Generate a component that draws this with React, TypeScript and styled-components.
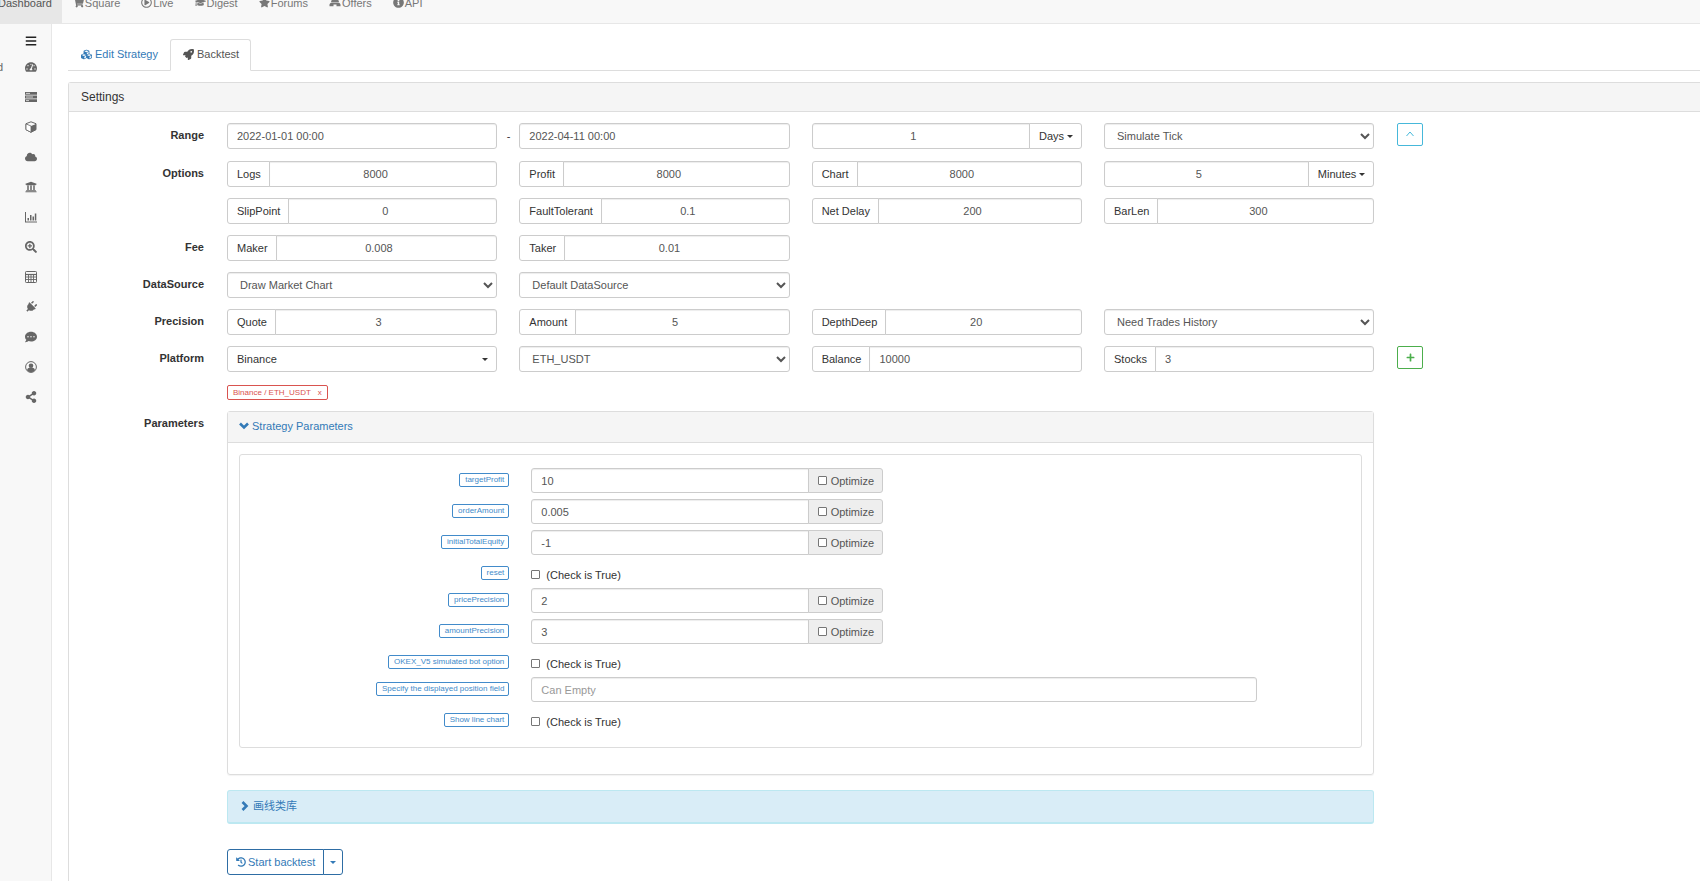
import React from "react";
import styled, { createGlobalStyle, css } from "styled-components";
import {
  FaShoppingCart, FaRegPlayCircle, FaGraduationCap, FaStar, FaInfoCircle, FaCloud, FaUniversity, FaPlug,
  FaShareAlt, FaSearchPlus, FaRocket, FaCubes, FaTachometerAlt, FaCommentDots, FaHistory,
  FaBars, FaPlus,
} from "react-icons/fa";

const Global = createGlobalStyle`
  *, *::before, *::after { box-sizing: border-box; }
  body {
    margin: 0;
    background: #fff;
    color: #333;
    font: 11px/16px "Liberation Sans", Arial, "Noto Sans CJK SC", sans-serif;
    overflow: hidden;
  }
  a { text-decoration: none; color: #337ab7; }
  button, input, select { font: inherit; }
`;

const Page = styled.div`
  display: flex;
  flex-direction: column;
  min-height: 100vh;
`;

const TopNav = styled.nav`
  display: flex;
  height: 39px;
  margin: -15px 0 0 -13px;
  background: #f8f8f8;
  border-bottom: 1px solid #e7e7e7;
`;

const NavLink = styled.a<{ $active?: boolean }>`
  display: flex;
  align-items: center;
  gap: 1px;
  padding: 0 10px 3px 11px;
  color: ${(p) => (p.$active ? "#555" : "#777")};
  background: ${(p) => (p.$active ? "#e7e7e7" : "transparent")};
`;

const Columns = styled.div`
  display: flex;
  flex: 1;
`;

const Sidebar = styled.aside`
  flex: 0 0 52px;
  padding-top: 6px;
  background: #f8f8f8;
  border-right: 1px solid #e7e7e7;
`;

const SideItem = styled.a<{ $menu?: boolean }>`
  display: flex;
  align-items: center;
  height: ${(p) => (p.$menu ? 22 : 30)}px;
  margin-left: -3px;
  padding-right: 14px;
  color: ${(p) => (p.$menu ? "#222" : "#666")};
  svg { margin-left: auto; width: 12px; height: 12px; }
`;

const Main = styled.main`
  flex: 1;
  min-width: 0;
  display: flex;
  flex-direction: column;
  padding: 15px 0 0 16px;
`;

const Tabs = styled.div`
  display: flex;
  height: 32px;
  border-bottom: 1px solid #ddd;
`;

const Tab = styled.a<{ $active?: boolean }>`
  display: flex;
  align-items: center;
  gap: 2px;
  height: 32px;
  padding: 0 11px 2px;
  border: 1px solid transparent;
  border-radius: 3px 3px 0 0;
  svg { width: 13px; height: 11px; }
  ${(p) => p.$active && css`
    color: #555;
    background: #fff;
    border-color: #ddd #ddd #fff;
  `}
`;

const Settings = styled.section`
  flex: 1;
  margin-top: 11px;
  border: solid #ddd;
  border-width: 1px 0 0 1px;
  border-top-left-radius: 3px;
`;

const SettingsHead = styled.h1`
  margin: 0;
  padding: 6px 12px;
  background: #f5f5f5;
  border-bottom: 1px solid #ddd;
  font-size: 12px;
  font-weight: 400;
`;

const Form = styled.form`
  display: flex;
  flex-direction: column;
  gap: 11px;
  padding: 11px 0;
`;

const Row = styled.div`
  display: grid;
  grid-template-columns: 441fr 877fr 877fr 877fr 877fr 944fr;
  &:first-child { padding-bottom: 1px; }
`;

const RowLabel = styled.div`
  padding: 4px 12px 0 0;
  text-align: right;
  font-weight: 700;
`;

const Cell = styled.div<{ $span?: number }>`
  grid-column: span ${(p) => p.$span || 1};
  min-width: 0;
  padding: 0 11px;
  position: relative;
`;

const Dash = styled.span`
  position: absolute;
  right: -2px;
  top: 5px;
`;

const control = css`
  width: 100%;
  min-width: 0;
  height: 26px;
  padding: 0 9px;
  color: #555;
  background: #fff;
  border: 1px solid #ccc;
  border-radius: 3px;
  box-shadow: inset 0 1px 1px rgba(0, 0, 0, 0.075);
  outline: 0;
`;

const Input = styled.input`
  ${control}
  &::placeholder { color: #999; }
`;

const Select = styled.select`
  ${control}
  padding-left: 8px;
`;

const Group = styled.div<{ $center?: boolean }>`
  display: flex;
  ${Input} {
    flex: 1;
    text-align: ${(p) => (p.$center ? "center" : "left")};
  }
  & > :first-child { border-top-right-radius: 0; border-bottom-right-radius: 0; }
  & > :last-child { border-top-left-radius: 0; border-bottom-left-radius: 0; }
  & > :not(:first-child) { margin-left: -1px; }
`;

const Addon = styled.label`
  flex: none;
  height: 26px;
  padding: 4px 8px 4px 9px;
  border: 1px solid #ccc;
  border-radius: 3px;
  background: #fff;
`;

const MenuButton = styled.button<{ $wide?: boolean }>`
  flex: none;
  display: flex;
  align-items: center;
  justify-content: space-between;
  gap: 3px;
  width: ${(p) => (p.$wide ? "100%" : "auto")};
  height: 26px;
  padding: 0 8px 0 9px;
  color: #333;
  background: #fff;
  border: 1px solid #ccc;
  border-radius: 3px;
`;

const Caret = styled.span`
  border: 3px solid transparent;
  border-top-color: currentColor;
  border-bottom: 0;
`;

const SquareButton = styled.button<{ $tone: string }>`
  display: grid;
  place-items: center;
  width: 26px;
  height: 23px;
  margin-left: 1px;
  padding: 0;
  color: ${(p) => p.$tone};
  background: #fff;
  border: 1px solid ${(p) => p.$tone};
  border-radius: 2px;
`;

const PlatformTag = styled.span`
  display: inline-flex;
  gap: 7px;
  height: 15px;
  margin-top: 2px;
  padding: 0 5px;
  border: 1px solid #d9534f;
  border-radius: 2px;
  color: #d9534f;
  font-size: 8px;
  line-height: 13px;
`;

const TagClose = styled.button`
  padding: 0;
  border: 0;
  background: none;
  color: inherit;
`;

const Panel = styled.div`
  border: 1px solid #ddd;
  border-radius: 3px;
  box-shadow: 0 1px 1px rgba(0, 0, 0, 0.05);
`;

const PanelHead = styled.div`
  padding: 6px 11px 8px;
  background: #f5f5f5;
  border-bottom: 1px solid #ddd;
`;

const PanelLink = styled.a`
  display: inline-flex;
  align-items: center;
  gap: 3px;
`;

const ParamBox = styled.div`
  margin: 11px 11px 26px;
  padding: 13px 0 12px;
  border: 1px solid #ddd;
  border-radius: 3px;
`;

const ParamRow = styled.div<{ $check?: boolean }>`
  display: grid;
  grid-template-columns: 3fr 4fr 4fr 1fr;
  height: ${(p) => (p.$check ? 27 : 31)}px;
  ${Input}, ${Addon} { height: 25px; }
`;

const ParamName = styled.div`
  padding: 5px 11px 0 0;
  display: flex;
  align-items: flex-start;
  justify-content: flex-end;
`;

const Badge = styled.label`
  height: 14px;
  padding: 0 4px 0 5px;
  border: 1px solid #428bca;
  border-radius: 2px;
  color: #428bca;
  font-size: 8px;
  line-height: 12px;
`;

const OptimizeAddon = styled(Addon)`
  display: flex;
  align-items: center;
  gap: 4px;
  color: #555;
  background: #eee;
`;

const Tick = styled.input`
  appearance: none;
  width: 9px;
  height: 9px;
  margin: 0;
  border: 1px solid #767676;
  border-radius: 1px;
  background: #fff;
`;

const CheckLabel = styled.label`
  display: inline-flex;
  align-items: center;
  gap: 6px;
  height: 27px;
`;

const Library = styled.div`
  margin-top: 4px;
  padding: 7px 12px;
  background: #d9edf7;
  border: 1px solid #bce8f1;
  border-bottom-width: 2px;
  border-radius: 3px;
`;

const StartGroup = styled.div`
  display: inline-flex;
  margin-top: 14px;
`;

const StartButton = styled.button`
  display: flex;
  align-items: center;
  gap: 2px;
  height: 26px;
  padding: 0 8px;
  color: #337ab7;
  background: #fff;
  border: 1px solid #2e6da4;
  border-radius: 3px 0 0 3px;
  & + & {
    margin-left: -1px;
    padding: 0 6px;
    border-radius: 0 3px 3px 0;
  }
`;

const BarChart = () => (
  <svg viewBox="0 0 12 12" fill="currentColor"><path d="M0 1h1v9.500h11v1H0zM2.500 7h1.500v2.500H2.500zM5 4h1.500v5.500H5zM7.500 5.500H9v4H7.500zM9.800 2.500h1.500v7H9.800z" /></svg>
);
const Calculator = () => (
  <svg viewBox="0 0 12 12" fill="none" stroke="currentColor"><rect x=".5" y=".5" width="11" height="11" rx=".8" /><path d="M1 3.500h10" strokeWidth="1.200" /><path d="M1 6h10M1 8.500h10M3.500 4v7M6 4v7M8.500 4v7" strokeWidth=".9" /></svg>
);
const Cube = () => (
  <svg viewBox="0 0 12 12"><path d="M6 .8 11 2.700v6L6 11.300 1 8.700v-6z" fill="none" stroke="currentColor" strokeLinejoin="round" /><path d="M1 2.900 6 5v6.300L1 8.700z" fill="#fff" stroke="currentColor" strokeWidth=".8" /><path d="M6 5l5-2.100v5.900l-5 2.500z" fill="currentColor" /></svg>
);
const Server = () => (
  <svg viewBox="0 0 12 12"><path d="M0 1h12v2.800H0zM0 4.600h12v2.800H0zM0 8.200h12V11H0z" fill="currentColor" /><path d="M1 2.400h4M1 6h7M1 9.600h3" stroke="#ddd" strokeWidth=".9" /></svg>
);
const Plug = () => <FaPlug transform="rotate(45)" />;
const UserCircle = () => (
  <svg viewBox="0 0 12 12"><circle cx="6" cy="6" r="5.400" fill="none" stroke="currentColor" /><circle cx="6" cy="4.700" r="2.300" fill="currentColor" /><path d="M2 9.300C2.400 7.500 3.500 6.900 4.500 6.800h3c1 .1 2.100.7 2.500 2.500C9 10.600 7.500 11.200 6 11.200S3 10.600 2 9.300z" fill="currentColor" /></svg>
);
const Offers = () => (
  <svg width="12" height="10" viewBox="0 0 12 10" fill="currentColor"><path d="M3 1h6l1 3H2z" /><path d="M.5 7.500A2.500 2.500 0 0 1 3 4.500h6a2.500 2.500 0 0 1 2.500 3v.8H7.500V6.500h-3v1.800H.5z" /></svg>
);
const AngleUp = () => (
  <svg width="8" height="8" viewBox="0 0 8 8" fill="none" stroke="currentColor"><path d="M.5 5 4 1l3.500 4" /></svg>
);
const ChevronDown = () => (
  <svg width="10" height="8" viewBox="0 0 10 8" fill="none" stroke="currentColor" strokeWidth="2.600"><path d="M1 1.500 5 5.500l4-4" /></svg>
);
const ChevronRight = () => (
  <svg width="10" height="10" viewBox="0 0 10 10" fill="none" stroke="currentColor" strokeWidth="2.600"><path d="M2.500 1 6.500 5l-4 4" /></svg>
);

const Labelled = ({ label, value, type = "number" }: { label: string; value: string; type?: string }) => {
  const id = "f-" + label.replace(" ", "-");
  return (
    <Cell>
      <Group $center={type === "number"}>
        <Addon htmlFor={id}>{label}</Addon>
        <Input id={id} type={type} defaultValue={value} />
      </Group>
    </Cell>
  );
};

const WithUnit = ({ name, value, unit }: { name: string; value: string; unit: string }) => (
  <Cell>
    <Group $center>
      <Input type="number" aria-label={name} defaultValue={value} />
      <MenuButton type="button">{unit}<Caret /></MenuButton>
    </Group>
  </Cell>
);

const Choice = ({ name, value }: { name: string; value: string }) => (
  <Cell><Select aria-label={name}><option>{value}</option></Select></Cell>
);

type Param = { name: string; value?: string; kind: "number" | "check" | "text" };
const params: Param[] = [
  { name: "targetProfit", value: "10", kind: "number" },
  { name: "orderAmount", value: "0.005", kind: "number" },
  { name: "initialTotalEquity", value: "-1", kind: "number" },
  { name: "reset", kind: "check" },
  { name: "pricePrecision", value: "2", kind: "number" },
  { name: "amountPrecision", value: "3", kind: "number" },
  { name: "OKEX_V5 simulated bot option", kind: "check" },
  { name: "Specify the displayed position field", kind: "text" },
  { name: "Show line chart", kind: "check" },
];

const ParamField = ({ param, id }: { param: Param; id: string }) => (
  <ParamRow $check={param.kind === "check"}>
    <ParamName><Badge htmlFor={id}>{param.name}</Badge></ParamName>
    <Cell $span={param.kind === "text" ? 2 : 1}>
      {param.kind === "number" && (
        <Group>
          <Input id={id} type="number" defaultValue={param.value} />
          <OptimizeAddon><Tick type="checkbox" />Optimize</OptimizeAddon>
        </Group>
      )}
      {param.kind === "check" && <CheckLabel><Tick id={id} type="checkbox" />(Check is True)</CheckLabel>}
      {param.kind === "text" && <Input id={id} placeholder="Can Empty" />}
    </Cell>
  </ParamRow>
);

const navItems = [
  { label: "Square", Icon: FaShoppingCart },
  { label: "Live", Icon: FaRegPlayCircle },
  { label: "Digest", Icon: FaGraduationCap },
  { label: "Forums", Icon: FaStar },
  { label: "Offers", Icon: Offers },
  { label: "API", Icon: FaInfoCircle },
];

const sideIcons = [Server, Cube, FaCloud, FaUniversity, BarChart, FaSearchPlus, Calculator, Plug, FaCommentDots, UserCircle, FaShareAlt];

export default function App() {
  return (
    <Page>
      <Global />
      <TopNav>
        <NavLink href="#" $active>Dashboard</NavLink>
        {navItems.map(({ label, Icon }) => (
          <NavLink href="#" key={label}><Icon size={11} />{label}</NavLink>
        ))}
      </TopNav>
      <Columns>
        <Sidebar>
          <SideItem href="#" $menu aria-label="Menu"><FaBars /></SideItem>
          <SideItem href="#">d<FaTachometerAlt /></SideItem>
          {sideIcons.map((Icon, i) => <SideItem href="#" key={i}><Icon /></SideItem>)}
        </Sidebar>
        <Main>
          <Tabs>
            <Tab href="#"><FaCubes />Edit Strategy</Tab>
            <Tab href="#" $active><FaRocket />Backtest</Tab>
          </Tabs>
          <Settings>
            <SettingsHead>Settings</SettingsHead>
            <Form>
              <Row>
                <RowLabel>Range</RowLabel>
                <Cell><Input aria-label="Start" defaultValue="2022-01-01 00:00" /><Dash>-</Dash></Cell>
                <Cell><Input aria-label="End" defaultValue="2022-04-11 00:00" /></Cell>
                <WithUnit name="Period" value="1" unit="Days" />
                <Choice name="Mode" value="Simulate Tick" />
                <Cell><SquareButton type="button" $tone="#46b8da" aria-label="Collapse"><AngleUp /></SquareButton></Cell>
              </Row>
              <Row>
                <RowLabel>Options</RowLabel>
                <Labelled label="Logs" value="8000" />
                <Labelled label="Profit" value="8000" />
                <Labelled label="Chart" value="8000" />
                <WithUnit name="Base period" value="5" unit="Minutes" />
              </Row>
              <Row>
                <RowLabel />
                <Labelled label="SlipPoint" value="0" />
                <Labelled label="FaultTolerant" value="0.1" />
                <Labelled label="Net Delay" value="200" />
                <Labelled label="BarLen" value="300" />
              </Row>
              <Row>
                <RowLabel>Fee</RowLabel>
                <Labelled label="Maker" value="0.008" />
                <Labelled label="Taker" value="0.01" />
              </Row>
              <Row>
                <RowLabel>DataSource</RowLabel>
                <Choice name="Chart drawing" value="Draw Market Chart" />
                <Choice name="Data source" value="Default DataSource" />
              </Row>
              <Row>
                <RowLabel>Precision</RowLabel>
                <Labelled label="Quote" value="3" />
                <Labelled label="Amount" value="5" />
                <Labelled label="DepthDeep" value="20" />
                <Choice name="Trades history" value="Need Trades History" />
              </Row>
              <Row>
                <RowLabel>Platform</RowLabel>
                <Cell><MenuButton type="button" $wide>Binance<Caret /></MenuButton></Cell>
                <Choice name="Pair" value="ETH_USDT" />
                <Labelled label="Balance" value="10000" type="text" />
                <Labelled label="Stocks" value="3" type="text" />
                <Cell><SquareButton type="button" $tone="#4cae4c" aria-label="Add"><FaPlus size={9} /></SquareButton></Cell>
              </Row>
              <Row>
                <RowLabel as="span" />
                <Cell $span={4}><PlatformTag>Binance / ETH_USDT <TagClose type="button">x</TagClose></PlatformTag></Cell>
              </Row>
              <Row>
                <RowLabel>Parameters</RowLabel>
                <Cell $span={4}>
                  <Panel>
                    <PanelHead><PanelLink href="#"><ChevronDown />Strategy Parameters</PanelLink></PanelHead>
                    <ParamBox>
                      {params.map((p, i) => <ParamField key={p.name} param={p} id={"p-" + i} />)}
                    </ParamBox>
                  </Panel>
                </Cell>
              </Row>
              <Row>
                <RowLabel />
                <Cell $span={4}><Library><PanelLink href="#"><ChevronRight />画线类库</PanelLink></Library></Cell>
              </Row>
              <Row>
                <RowLabel />
                <Cell $span={4}>
                  <StartGroup>
                    <StartButton type="button"><FaHistory size={10} />Start backtest</StartButton>
                    <StartButton type="button" aria-label="More"><Caret /></StartButton>
                  </StartGroup>
                </Cell>
              </Row>
            </Form>
          </Settings>
        </Main>
      </Columns>
    </Page>
  );
}
